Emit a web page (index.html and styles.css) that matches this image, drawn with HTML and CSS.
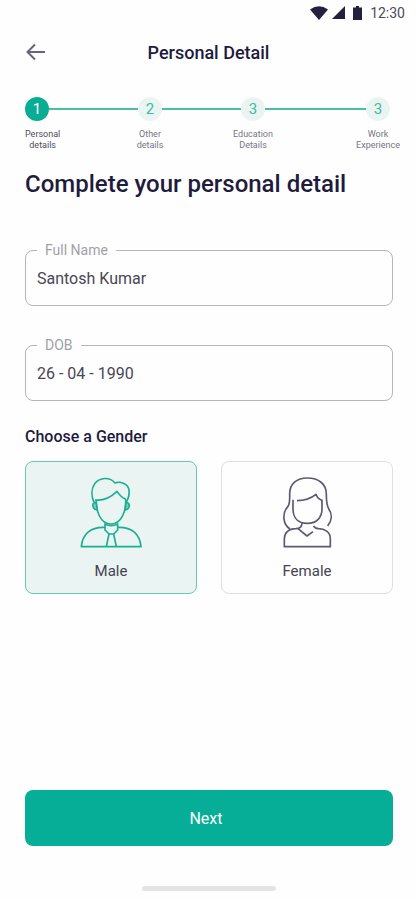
FILE: index.html
```html
<!DOCTYPE html>
<html lang="en">
<head>
<meta charset="utf-8">
<meta name="viewport" content="width=device-width, initial-scale=1">
<title>Personal Detail</title>
<link rel="stylesheet" href="styles.css">
</head>
<body>
<div class="status">
  <svg width="18" height="14" viewBox="0 0 18 14" aria-hidden="true"><path d="M0 3.500Q9-3 18 3.500L9 14Z"/></svg>
  <svg width="13" height="14" viewBox="0 0 13 14" aria-hidden="true"><path d="M13 0V13H0Z"/></svg>
  <svg class="battery" width="9" height="14" viewBox="0 0 9 14" aria-hidden="true"><path d="M3 0H6V1.500H9V14H0V1.500H3Z"/></svg>
  <span>12:30</span>
</div>
<header class="header">
  <button class="back" type="button" aria-label="Back">
    <svg width="20" height="18" viewBox="0 0 20 18" aria-hidden="true"><path d="M19 9H2M9 1.500L1.500 9L9 16.500"/></svg>
  </button>
  <h1 class="title">Personal Detail</h1>
</header>
<main class="content">
  <ol class="steps">
    <li class="step current" aria-current="step"><span class="dot">1</span><span class="name">Personal<br>details</span></li>
    <li class="step"><span class="dot">2</span><span class="name">Other<br>details</span></li>
    <li class="step"><span class="dot">3</span><span class="name">Education<br>Details</span></li>
    <li class="step"><span class="dot">3</span><span class="name">Work<br>Experience</span></li>
  </ol>
  <form class="form">
    <h2 class="heading">Complete your personal detail</h2>
    <fieldset class="field">
      <legend><label for="full-name">Full Name</label></legend>
      <input id="full-name" type="text" value="Santosh Kumar">
    </fieldset>
    <fieldset class="field">
      <legend><label for="dob">DOB</label></legend>
      <input id="dob" type="text" value="26 - 04 - 1990">
    </fieldset>
    <h3 class="subheading" id="gender-title">Choose a Gender</h3>
    <div class="genders" role="radiogroup" aria-labelledby="gender-title">
      <label class="gender">
        <input type="radio" name="gender" value="male" checked>
        <svg width="66" height="74" viewBox="189 60 198 222" aria-hidden="true">
          <path d="M237 142C229 124 228 101 240 85C254 68 283 64 300 84C315 78 338 86 342 104C344 116 340 130 335 140"/>
          <path d="M240 135C263 138 286 128 306 109C313 120 322 128 332 132"/>
          <path d="M244 135C243 167 255 207 288 207C320 207 334 167 332 132"/>
          <path class="ear" d="M243 142C228 143 232 163 247 165ZM333 142C348 143 345 163 330 165Z"/>
          <path d="M270 205V225L282 237H296L308 225V205M270 208Q289 216 308 208"/>
          <path d="M270 217C226 215 202 238 199 275H378C375 238 351 215 308 217"/>
          <path d="M282 237L274 275M296 237L304 275"/>
        </svg>
        <span>Male</span>
      </label>
      <label class="gender">
        <input type="radio" name="gender" value="female">
        <svg width="66" height="74" viewBox="192 60 198 222" aria-hidden="true">
          <path d="M240 222C216 207 218 172 232 157C241 148 239 129 239 116C239 87 260 69 292 69C326 69 349 87 349 117C349 139 349 149 356 161C368 178 365 198 353 213"/>
          <path d="M249 134V162C249 190 266 205 292 205C320 205 336 187 336 162V136Q323 132 318 118C302 131 285 137 261 137"/>
          <path d="M276 204Q276 220 258 221C235 221 223 235 223 251V275H361V251C361 231 344 221 325 221Q315 220 310 213"/>
          <path d="M264 221L291 243L309 230"/>
        </svg>
        <span>Female</span>
      </label>
    </div>
    <button class="next" type="submit">Next</button>
  </form>
</main>
<div class="home-bar"></div>
</body>
</html>
```
FILE: styles.css
```css
* {
  box-sizing: border-box;
}

body {
  margin: 0;
  min-height: 100vh;
  display: flex;
  flex-direction: column;
  background: #fefefe;
  color: #1f1b3d;
  font-family: Roboto, "Liberation Sans", sans-serif;
}

.status {
  display: flex;
  justify-content: flex-end;
  align-items: center;
  gap: 4px;
  height: 26px;
  padding-right: 12px;
  font-size: 14px;
  color: #4b4a58;
}

.status svg {
  fill: #24213f;
}

.status .battery {
  margin: 0 4px;
}

.header {
  display: grid;
  grid-template-columns: 24px 1fr 24px;
  align-items: center;
  height: 52px;
  padding: 0 24px;
}

.back {
  display: flex;
  padding: 0 0 0 2px;
  border: 0;
  background: none;
}

.back svg {
  fill: none;
  stroke: #67657a;
  stroke-width: 2;
}

.title {
  margin: 0;
  text-align: center;
  font-size: 18px;
  font-weight: 500;
}

.content {
  flex: 1;
  display: flex;
  flex-direction: column;
  padding: 19px 24px 0 25px;
}

.steps {
  display: grid;
  grid-template-columns: 113fr 103fr 125fr 24px;
  margin: 0 3px 0 0;
  padding: 0;
  list-style: none;
}

.step {
  display: grid;
  grid-template-columns: 24px 1fr;
  row-gap: 8px;
  align-items: center;
}

.step:not(:last-child)::after {
  content: "";
  grid-area: 1 / 2;
  height: 2px;
  background: #4cbda3;
}

.dot {
  grid-area: 1 / 1;
  height: 24px;
  border-radius: 50%;
  background: #eaf5f3;
  color: #3dbb9d;
  text-align: center;
  font-size: 15px;
  line-height: 24px;
}

.name {
  grid-area: 2 / 1;
  justify-self: center;
  text-align: center;
  font-size: 9px;
  line-height: 11px;
  color: #777581;
}

.current .dot {
  background: #09ad94;
  color: #fff;
}

.current .name {
  justify-self: start;
  color: #504d60;
}

.form {
  flex: 1;
  display: flex;
  flex-direction: column;
}

.heading {
  margin: 17px 0 42px;
  font-size: 24px;
  font-weight: 500;
  line-height: 32px;
}

.field {
  height: 64px;
  min-width: 0;
  margin: 0 0 31px;
  padding: 0 11px;
  border: 1px solid #b4b5b9;
  border-radius: 8px;
}

.field legend {
  padding: 0 8px;
  font-size: 14px;
  line-height: 16px;
  color: #a0a1a8;
}

.field input {
  display: block;
  width: 100%;
  height: 40px;
  padding: 0;
  border: 0;
  background: none;
  font: 16px Roboto, "Liberation Sans", sans-serif;
  color: #494755;
}

.subheading {
  margin: -4px 0 15px;
  font-size: 16px;
  font-weight: 500;
  line-height: 18px;
}

.genders {
  display: grid;
  grid-template-columns: 1fr 1fr;
  gap: 24px;
}

.gender {
  display: flex;
  flex-direction: column;
  align-items: center;
  gap: 12px;
  height: 133px;
  padding-top: 13px;
  border: 1px solid #dedfe2;
  border-radius: 8px;
  font-size: 15px;
  line-height: 20px;
  color: #454351;
}

.gender input {
  position: absolute;
  opacity: 0;
}

.gender svg {
  fill: none;
  stroke: #5c5974;
  stroke-width: 5;
  stroke-linejoin: round;
}

.gender:has(:checked) {
  border-color: #69c9b0;
  background: #eaf4f3;
}

.gender:has(:checked) svg {
  stroke: #1cae91;
}

.gender .ear {
  fill: #7ccfbd;
}

.next {
  height: 56px;
  margin-top: auto;
  padding: 0 6px 0 0;
  border: 0;
  border-radius: 8px;
  background: #06ad97;
  color: #fff;
  font: 16px Roboto, "Liberation Sans", sans-serif;
}

.home-bar {
  width: 134px;
  height: 5px;
  margin: 40px auto 9px;
  border-radius: 3px;
  background: #e4e4e5;
}
```
